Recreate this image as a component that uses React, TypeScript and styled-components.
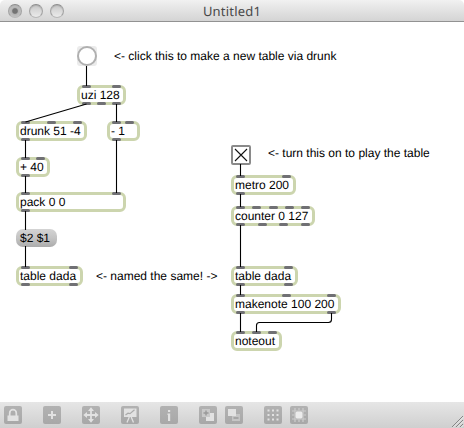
import React from 'react';
import styled, { createGlobalStyle } from 'styled-components';

const GlobalStyle = createGlobalStyle`
  * { box-sizing: border-box; }
  body { margin: 0; background: #fff; }
`;

const Window = styled.main`
  width: 464px;
  height: 428px;
  display: flex;
  flex-direction: column;
  overflow: hidden;
  background: #fff;
  font: 12px/14px "Liberation Sans", Arial, sans-serif;
  text-rendering: geometricPrecision;
  color: #000;
`;

const TitleBar = styled.header`
  flex: none;
  height: 22px;
  display: grid;
  grid-template-columns: 72px 1fr 72px;
  align-items: center;
  border-bottom: 1px solid #929292;
  border-radius: 5px 5px 0 0;
  background: linear-gradient(#f1f1f1, #e8e8e8 30%, #d4d4d4);
`;

const Lights = styled.div`
  display: flex;
  gap: 7px;
  padding: 1px 0 0 8px;
`;

const Light = styled.span<{ $edited?: boolean }>`
  width: 14px;
  height: 14px;
  border-radius: 50%;
  border: 1px solid #a2a2a2;
  border-top-color: #8c8c8c;
  border-bottom-color: #b8b8b8;
  background: ${(p) =>
    p.$edited
      ? 'radial-gradient(circle, #747474 0 2.3px, #b4b4b4 3.4px, #c4c4c4 6px)'
      : 'linear-gradient(#c6c6c6, #d8d8d8 45%, #ebebeb)'};
  box-shadow: inset 0 1px 1px #b0b0b0;
`;

const Title = styled.h1`
  margin: 0;
  text-align: center;
  font: 400 13px/20px "Noto Sans", "Open Sans", sans-serif;
  letter-spacing: 0.2px;
  color: #484848;
`;

const Canvas = styled.section`
  position: relative;
  flex: 1;
`;

const Cords = styled.svg`
  position: absolute;
  left: 0;
  top: 0;
  fill: none;
  stroke: #000;
  stroke-width: 1.1;
`;

const Placed = styled.div<{ $x: number; $y: number }>`
  position: absolute;
  left: ${(p) => p.$x}px;
  top: ${(p) => p.$y - 22}px;
  white-space: pre;
`;

const ObjectBox = styled(Placed)<{ $w: number }>`
  width: ${(p) => p.$w}px;
  height: 20px;
  padding: 0 1px;
  border: 3px solid #ccd5ae;
  border-radius: 6px;
  background: #fff;
`;

const Port = styled.i<{ $x: number; $out?: boolean }>`
  position: absolute;
  left: ${(p) => p.$x - 3}px;
  ${(p) => (p.$out ? 'bottom' : 'top')}: -3px;
  width: 9px;
  height: 3px;
  border-radius: 1.5px;
  background: #707074;
`;

const Message = styled(Placed)`
  width: 41px;
  height: 18px;
  padding: 2px 4px;
  border-radius: 7px;
  background: linear-gradient(#d4d4d4, #c4c4c4 50%, #ababab);
`;

const Bang = styled(Placed)`
  width: 20px;
  height: 20px;
  display: grid;
  place-items: center;
  border-radius: 3px;
  background: #ebebeb;

  &::before {
    content: '';
    width: 16px;
    height: 16px;
    border: 2px solid #b0b0b0;
    border-radius: 50%;
    background: #fff;
  }
`;

const Toggle = styled(Placed)`
  width: 20px;
  height: 20px;
  border: 2px solid #8a8a8a;
  border-radius: 2px;
  background: #fff;

  svg { display: block; }
`;

const Toolbar = styled.footer`
  flex: none;
  height: 26px;
  display: flex;
  align-items: flex-start;
  padding: 4px 0 0 4px;
  gap: 21px;
  background: linear-gradient(#e6e6e6, #cfcfcf);
`;

const Group = styled.div`
  display: flex;
  gap: 8px;
`;

const ToolButton = styled.button`
  width: 18px;
  height: 18px;
  padding: 0;
  border: 0;
  border-radius: 2px;
  background: linear-gradient(#b2b2b2, #a8a8a8);
  color: #e2e2e2;

  svg { display: block; }
`;

const Grip = styled.svg`
  margin-left: auto;
  align-self: flex-end;
`;

type Patch = { x: number; y: number; w: number; text: string; ins: number[]; outs: number[] };

const objects: Patch[] = [
  { x: 77, y: 85, w: 49, text: 'uzi 128', ins: [5, 35], outs: [5, 20, 35] },
  { x: 16, y: 121, w: 71, text: 'drunk 51 -4', ins: [5, 31, 57], outs: [5] },
  { x: 107, y: 121, w: 33, text: '- 1', ins: [5, 18], outs: [5] },
  { x: 16, y: 157, w: 34, text: '+ 40', ins: [5, 20], outs: [5] },
  { x: 16, y: 192, w: 110, text: 'pack 0 0', ins: [5, 96], outs: [5] },
  { x: 16, y: 266, w: 67, text: 'table dada', ins: [5, 53], outs: [5, 53] },
  { x: 231, y: 175, w: 65, text: 'metro 200', ins: [5, 51], outs: [5] },
  { x: 231, y: 206, w: 84, text: 'counter 0 127', ins: [5, 21, 38, 54, 70], outs: [5, 27, 48, 70] },
  { x: 231, y: 266, w: 67, text: 'table dada', ins: [5, 53], outs: [5, 53] },
  { x: 231, y: 294, w: 110, text: 'makenote 100 200', ins: [5, 51, 96], outs: [5, 96] },
  { x: 231, y: 331, w: 51, text: 'noteout', ins: [5, 21, 37], outs: [] },
];

const comments = [
  { x: 114, y: 49, text: '<- click this to make a new table via drunk' },
  { x: 268, y: 146, text: '<- turn this on to play the table' },
  { x: 96, y: 269, text: '<- named the same! ->' },
];

const cords = [
  'M86.5 66V86', 'M86.5 104L25.5 122', 'M116.5 104V122', 'M116.5 140V193',
  'M25.5 140V158', 'M25.5 176V193', 'M25.5 211V230', 'M25.5 246V267',
  'M240.5 164V176', 'M240.5 194V207', 'M240.5 225V267', 'M240.5 285V295',
  'M240.5 313V332', 'M331.5 313V319.5Q331.5 322.5 328.5 322.5H259.5Q256.5 322.5 256.5 325.5V332',
];

const Icon = ({ children }: { children: React.ReactNode }) => (
  <svg width="18" height="18" viewBox="0 0 18 18" fill="none" stroke="currentColor">{children}</svg>
);

const LockIcon = () => (
  <Icon>
    <path d="M5.7 10V7a3.3 3.3 0 0 1 6.6 0v3" strokeWidth="1.7" />
    <path d="M3.5 9.5h11V15h-11z" fill="currentColor" stroke="none" />
  </Icon>
);
const PlusIcon = () => <Icon><path d="M9 5v8M5 9h8" strokeWidth="2" /></Icon>;
const MoveIcon = () => (
  <Icon>
    <path d="M9 3v12M3 9h12" strokeWidth="1.8" />
    <path d="M9 1.3 12 5H6zM9 16.7 6 13h6zM1.3 9 5 6v6zM16.7 9 13 12V6z" fill="currentColor" stroke="none" />
  </Icon>
);
const EaselIcon = () => (
  <Icon>
    <path d="M3 2.5h12.5V11H3z" fill="currentColor" stroke="none" />
    <path d="M8.3 11 6 16.5M10.2 11l2.3 5.5" strokeWidth="1.3" />
    <path d="M4.5 9 7 7.2l2 .5 4.5-4" stroke="#aaa" strokeWidth="1.2" />
  </Icon>
);
const InfoIcon = () => (
  <Icon><path d="M8 4h2.2v2H8zM7.5 7.5h2.7V15H8V9h-.5z" fill="currentColor" stroke="none" /></Icon>
);
const AddViewIcon = () => (
  <Icon>
    <path d="M7 7h8v8H7z" fill="currentColor" stroke="none" />
    <path d="M3 3h8v8H3z" fill="#c9c9c9" stroke="none" />
    <path d="M7 4.5v5M4.5 7h5" stroke="#999" strokeWidth="1.4" />
  </Icon>
);
const RemoveViewIcon = () => (
  <Icon>
    <path d="M7 8h8v7H7z" fill="#c5c5c5" stroke="none" />
    <path d="M3 3h8v7H3z" fill="currentColor" stroke="none" />
    <path d="M8.5 12h5" stroke="#999" strokeWidth="1.4" />
  </Icon>
);
const GridIcon = () => (
  <Icon><path d="M3.5 4.5h12M3.5 9h12M3.5 13.5h12" strokeWidth="2" strokeDasharray="2 2.5" /></Icon>
);
const SnapIcon = () => (
  <Icon>
    <path d="M5 2v14M9 2v14M13 2v14M2 5h14M2 9h14M2 13h14" stroke="#cdcdcd" strokeWidth="1.2" />
    <rect x="5" y="5" width="8" height="8" rx="2" fill="#ececec" stroke="#bbb" />
  </Icon>
);

const tools = [
  [LockIcon], [PlusIcon], [MoveIcon], [EaselIcon], [InfoIcon],
  [AddViewIcon, RemoveViewIcon], [GridIcon, SnapIcon],
];

export default function App() {
  return (
    <Window>
      <GlobalStyle />
      <TitleBar>
        <Lights><Light $edited /><Light /><Light /></Lights>
        <Title>Untitled1</Title>
      </TitleBar>
      <Canvas>
        <Bang $x={77} $y={46} />
        <Toggle $x={231} $y={145}>
          <svg width="16" height="16" stroke="#111" strokeWidth="1.1"><path d="M2 2l12 12M14 2L2 14" /></svg>
        </Toggle>
        {objects.map((o) => (
          <ObjectBox key={`${o.x}-${o.y}`} $x={o.x} $y={o.y} $w={o.w}>
            {o.text}
            {o.ins.map((x) => <Port key={`i${x}`} $x={x} />)}
            {o.outs.map((x) => <Port key={`o${x}`} $x={x} $out />)}
          </ObjectBox>
        ))}
        <Message $x={16} $y={229}>$2 $1</Message>
        {comments.map((c) => <Placed key={c.text} $x={c.x} $y={c.y}>{c.text}</Placed>)}
        <Cords width="464" height="380" viewBox="0 22 464 380">
          {cords.map((d) => <path key={d} d={d} />)}
        </Cords>
      </Canvas>
      <Toolbar>
        {tools.map((group, i) => (
          <Group key={i}>
            {group.map((Glyph, j) => <ToolButton key={j}><Glyph /></ToolButton>)}
          </Group>
        ))}
        <Grip width="13" height="13" viewBox="0 0 13 13" stroke="#858585">
          <path d="M1 12 12 1M5 12l7-7M9 12l3-3" />
          <path d="M2 12.5 12.5 2M6 12.5 12.5 6M10 12.5l2.5-2.5" stroke="#f0f0f0" strokeWidth=".7" />
        </Grip>
      </Toolbar>
    </Window>
  );
}
